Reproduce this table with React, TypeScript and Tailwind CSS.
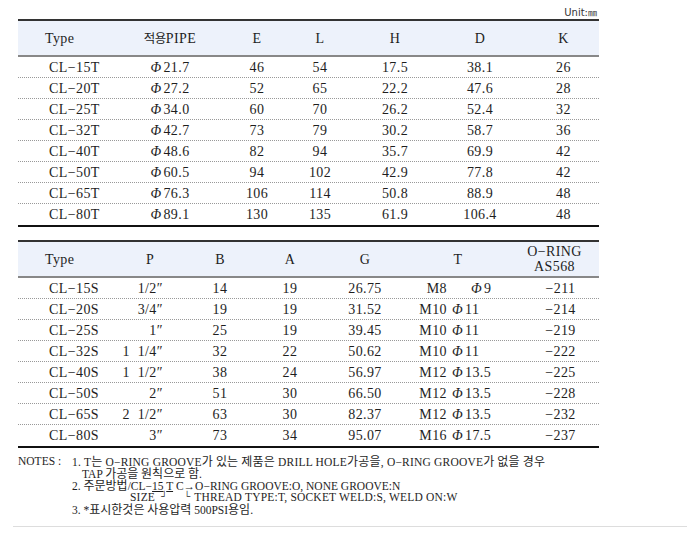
import React from "react";

const t1: string[][] = [
  ["CL−15T", "21.7", "46", "54", "17.5", "38.1", "26"],
  ["CL−20T", "27.2", "52", "65", "22.2", "47.6", "28"],
  ["CL−25T", "34.0", "60", "70", "26.2", "52.4", "32"],
  ["CL−32T", "42.7", "73", "79", "30.2", "58.7", "36"],
  ["CL−40T", "48.6", "82", "94", "35.7", "69.9", "42"],
  ["CL−50T", "60.5", "94", "102", "42.9", "77.8", "42"],
  ["CL−65T", "76.3", "106", "114", "50.8", "88.9", "48"],
  ["CL−80T", "89.1", "130", "135", "61.9", "106.4", "48"],
];

const t2: string[][] = [
  ["CL−15S", "1/2″", "14", "19", "26.75", "M8", "9", "−211"],
  ["CL−20S", "3/4″", "19", "19", "31.52", "M10", "11", "−214"],
  ["CL−25S", "1″", "25", "19", "39.45", "M10", "11", "−219"],
  ["CL−32S", "1  1/4″", "32", "22", "50.62", "M10", "11", "−222"],
  ["CL−40S", "1  1/2″", "38", "24", "56.97", "M12", "13.5", "−225"],
  ["CL−50S", "2″", "51", "30", "66.50", "M12", "13.5", "−228"],
  ["CL−65S", "2  1/2″", "63", "30", "82.37", "M12", "13.5", "−232"],
  ["CL−80S", "3″", "73", "34", "95.07", "M16", "17.5", "−237"],
];

const serif = "font-['Liberation_Serif','DejaVu_Serif','Noto_Sans_CJK_KR',serif]";

function Phi() {
  return <span className="italic mr-[2px]">Φ</span>;
}

function K({ children }: { children: React.ReactNode }) {
  return <span className="text-[12px] leading-[12px] font-['Noto_Sans_CJK_KR',sans-serif]">{children}</span>;
}

export default function App() {
  return (
    <div className={`w-[694px] h-[539px] bg-white text-[#1e1e1e] ${serif} overflow-hidden`}>
      <div className="pt-[6px] pl-[18px] w-[599px]">
        <div className="h-[13px] text-right text-[10px] leading-[13px] text-[#333] font-['DejaVu_Sans','Noto_Sans_CJK_KR',sans-serif] pr-[2px]">
          Unit:<span className="text-[9px]">㎜</span>
        </div>

        {/* Table 1 */}
        <div className="border-t-2 border-b-2 border-t-[#333] border-b-[#111] text-[14px] tracking-[0.4px]">
          <div className="grid grid-cols-[90px_124px_50px_76px_74px_96px_71px] h-[36px] items-center bg-[#edf2fb] border-b-2 border-[#888] text-center">
            <div className="text-left pl-[27px]">Type</div>
            <div>
              <span className="font-['Noto_Sans_CJK_KR',sans-serif] text-[12.5px] tracking-[-0.5px]">적용</span>PIPE
            </div>
            <div>E</div>
            <div>L</div>
            <div>H</div>
            <div>D</div>
            <div>K</div>
          </div>
          {t1.map((r, i) => (
            <div
              key={r[0]}
              className={`grid grid-cols-[90px_124px_50px_76px_74px_96px_71px] h-[21px] items-center text-center ${
                i < t1.length - 1 ? "border-b border-dotted border-[#999]" : ""
              }`}
            >
              <div className="text-left pl-[31px] whitespace-nowrap">{r[0]}</div>
              <div>
                <Phi />
                {r[1]}
              </div>
              <div>{r[2]}</div>
              <div>{r[3]}</div>
              <div>{r[4]}</div>
              <div>{r[5]}</div>
              <div>{r[6]}</div>
            </div>
          ))}
        </div>

        {/* Table 2 */}
        <div className="mt-[13px] border-t-2 border-b-2 border-t-[#333] border-b-[#111] text-[14px] tracking-[0.4px]">
          <div className="grid grid-cols-[90px_84px_56px_84px_66px_120px_81px] h-[36px] items-center bg-[#edf2fb] border-b-2 border-[#888] text-center">
            <div className="text-left pl-[27px]">Type</div>
            <div>P</div>
            <div>B</div>
            <div>A</div>
            <div>G</div>
            <div>T</div>
            <div className="flex flex-col items-center leading-[15px] pr-[8px]">
              <span>O−RING</span>
              <span>AS568</span>
            </div>
          </div>
          {t2.map((r, i) => (
            <div
              key={r[0]}
              className={`grid grid-cols-[90px_84px_56px_84px_66px_120px_81px] h-[21px] items-center text-center ${
                i < t2.length - 1 ? "border-b border-dotted border-[#999]" : ""
              }`}
            >
              <div className="text-left pl-[31px] whitespace-nowrap">{r[0]}</div>
              <div className="text-right pr-[29px] whitespace-pre">{r[1]}</div>
              <div>{r[2]}</div>
              <div>{r[3]}</div>
              <div>{r[4]}</div>
              <div className="flex text-left whitespace-pre">
                <span className="w-[49px] text-right">{r[5]}</span>
                <span className={r[5] === "M8" ? "ml-[24px]" : "ml-[5px]"}>
                  <Phi />
                  {r[6]}
                </span>
              </div>
              <div className="pl-[4px]">{r[7]}</div>
            </div>
          ))}
        </div>

        {/* Notes */}
        <div className={`mt-[7px] flex text-[11.5px] leading-[12px] text-[#1e1e1e] ${serif}`}>
          <div className="w-[54px] whitespace-pre">NOTES : </div>
          <div className="flex flex-col">
            <div className="h-[12px] whitespace-pre tracking-[0.2px]">
              1. T<K>는</K> O−RING GROOVE<K>가 있는 제품은</K> DRILL HOLE<K>가공을</K>, O−RING GROOVE<K>가 없을 경우</K>
            </div>
            <div className="h-[12px] pl-[10px] whitespace-pre">
              TAP <K>가공을 원칙으로 함</K>.
            </div>
            <div className="h-[12px] whitespace-pre">
              2. <K>주문방법</K>/CL−<span className="underline">15</span> <span className="underline">T</span> C→O−RING GROOVE:O, NONE GROOVE:N
            </div>
            <div className="h-[12px] flex items-start whitespace-pre pl-[58px] tracking-[0.2px]">
              <span>SIZE</span>
              <span className="ml-[6px] text-[9px] leading-[10px]">┘</span>
              <span className="ml-[16px] text-[9px] leading-[10px]">└</span>
              <span className="ml-[4px]">THREAD TYPE:T, SOCKET WELD:S, WELD ON:W</span>
            </div>
            <div className="h-[12px] whitespace-pre">
              3. *<K>표시한것은 사용압력</K> 500PSI<K>용임</K>.
            </div>
          </div>
        </div>
      </div>
      <div className="mt-[11px] ml-[13px] mr-[7px] border-t border-[#ddd]"></div>
    </div>
  );
}
